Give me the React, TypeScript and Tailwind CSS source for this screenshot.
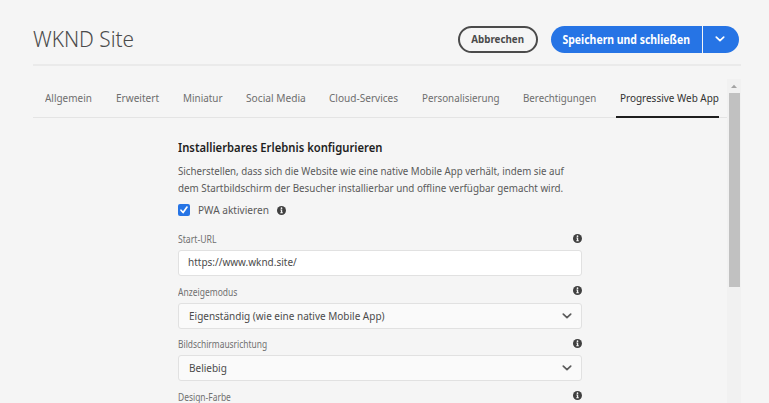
import React from 'react';

const tabs = [
  { label: 'Allgemein', width: 'w-[47px]', scale: 'scale-x-[0.905]' },
  { label: 'Erweitert', width: 'w-[43px]', scale: 'scale-x-[0.915]' },
  { label: 'Miniatur', width: 'w-[39px]', scale: 'scale-x-[0.9]' },
  { label: 'Social Media', width: 'w-[59px]', scale: 'scale-x-[0.925]' },
  { label: 'Cloud-Services', width: 'w-[69px]', scale: 'scale-x-[0.915]' },
  { label: 'Personalisierung', width: 'w-[77px]', scale: 'scale-x-[0.89]' },
  { label: 'Berechtigungen', width: 'w-[73px]', scale: 'scale-x-[0.885]' },
];

function Info() {
  return (
    <svg className="block size-[9px] shrink-0" viewBox="0 0 9 9">
      <circle cx="4.5" cy="4.5" r="4.5" fill="#404040" />
      <path d="M3.4 3.6h1.8v2.7h.6v.9H3.3v-.9h.6V4.5h-.5z" fill="#f5f5f5" />
      <circle cx="4.5" cy="2.2" r="0.85" fill="#f5f5f5" />
    </svg>
  );
}

function Chevron({ className }: { className: string }) {
  return (
    <svg className={className} viewBox="0 0 10 6" fill="none" stroke="currentColor" strokeWidth="1.7" strokeLinecap="round" strokeLinejoin="round">
      <path d="M1.3 1.1 5 4.7l3.7-3.6" />
    </svg>
  );
}

function Field({ label, labelScale, value, valueScale, select }: { label: string; labelScale: string; value?: string; valueScale?: string; select?: boolean }) {
  return (
    <div className="h-[52.6px]">
      <div className="flex h-[17px] items-start justify-between">
        <span className={`origin-left text-[10px] leading-[12px] whitespace-nowrap text-[#707070] ${labelScale}`}>{label}</span>
        <span className="pt-[0.5px]"><Info /></span>
      </div>
      {value && (
        <div className={`flex h-[26px] items-center justify-between rounded-[3px] border border-[#e1e1e1] pr-[9px] ${select ? 'bg-[#fafafa] pl-[10px]' : 'bg-white pb-[2px] pl-[9px]'}`}>
          <span className={`origin-left text-[11px] leading-4 whitespace-nowrap text-[#4b4b4b] ${valueScale}`}>{value}</span>
          {select && <Chevron className="h-[6px] w-[10px] text-[#5c5c5c]" />}
        </div>
      )}
    </div>
  );
}

export default function App() {
  return (
    <div className="h-[403px] w-[769px] overflow-hidden bg-[#f5f5f5] pr-[28px] pl-[33px] font-['Noto_Sans',sans-serif]">
      <header className="flex h-[66px] items-start justify-between border-b-2 border-[#eaeaea] pt-[26px]">
        <h1 className="-mt-px origin-left scale-x-[0.945] text-[22px] leading-[26px] font-light whitespace-nowrap text-[#4b4b4b]">WKND Site</h1>
        <div className="flex gap-[13px] pr-[2px]">
          <button className="flex h-[27px] w-[80px] items-center justify-center rounded-full border-2 border-[#4b4b4b] pb-px text-[11px] leading-4 font-bold whitespace-nowrap text-[#4b4b4b]">
            <span className="scale-x-[0.89]">Abbrechen</span>
          </button>
          <div className="flex h-[27px] gap-px">
            <button className="flex w-[151px] items-center justify-center rounded-l-full bg-[#2674e5] text-[12px] leading-4 font-bold whitespace-nowrap text-white">
              <span className="scale-x-[0.87]">Speichern und schließen</span>
            </button>
            <button className="flex w-[36px] items-center rounded-r-full bg-[#2674e5] pb-[2px] pl-[12px] text-white">
              <Chevron className="h-[6px] w-[10px]" />
            </button>
          </div>
        </div>
      </header>
      <div className="mt-[13px] flex h-[324px]">
        <div className="w-[694px]">
          <nav className="flex h-[39px] gap-[24px] border-b border-[#e4e4e4] pl-[12px] text-[11px] leading-4 text-[#6e6e6e]">
            {tabs.map((t) => (
              <span key={t.label} className={`shrink-0 pt-[11px] whitespace-nowrap ${t.width}`}>
                <span className={`inline-block origin-left ${t.scale}`}>{t.label}</span>
              </span>
            ))}
            <span className="-ml-[4px] h-[39px] w-[103px] shrink-0 border-b-2 border-[#1e1e1e] pt-[11px] pl-[4px] whitespace-nowrap text-[#323232]">
              <span className="inline-block origin-left scale-x-[0.905]">Progressive Web App</span>
            </span>
          </nav>
          <main className="ml-[145px] w-[404px] pt-[20px]">
            <h2 className="origin-left scale-x-[0.865] text-[13px] leading-[18px] font-semibold whitespace-nowrap text-[#1e1e1e]">Installierbares Erlebnis konfigurieren</h2>
            <p className="mt-[6px] text-[11px] leading-[17px] whitespace-nowrap text-[#5a5a5a]">
              <span className="block origin-left scale-x-[0.883]">Sicherstellen, dass sich die Website wie eine native Mobile App verhält, indem sie auf</span>
              <span className="block origin-left scale-x-[0.894]">dem Startbildschirm der Besucher installierbar und offline verfügbar gemacht wird.</span>
            </p>
            <div className="mt-[7px] flex h-[14px] items-center">
              <span className="flex size-[12px] items-center justify-center rounded-[2px] bg-[#2674e5]">
                <svg className="size-[10px]" viewBox="0 0 10 10" fill="none" stroke="white" strokeWidth="1.7" strokeLinecap="round" strokeLinejoin="round">
                  <path d="m2 5.2 2.1 2.3L8 2.1" />
                </svg>
              </span>
              <span className="ml-[8px] w-[79px] text-[11px] leading-4 whitespace-nowrap text-[#5a5a5a]">
                <span className="inline-block origin-left scale-x-[0.92]">PWA aktivieren</span>
              </span>
              <Info />
            </div>
            <div className="pt-[16px]">
              <Field label="Start-URL" labelScale="scale-x-[0.865]" value="https://www.wknd.site/" valueScale="scale-x-[0.908]" />
              <Field label="Anzeigemodus" labelScale="scale-x-[0.85]" value="Eigenständig (wie eine native Mobile App)" valueScale="scale-x-[0.908]" select />
              <Field label="Bildschirmausrichtung" labelScale="scale-x-[0.84]" value="Beliebig" valueScale="scale-x-[0.91]" select />
              <Field label="Design-Farbe" labelScale="scale-x-[0.845]" />
            </div>
          </main>
        </div>
        <aside className="flex w-[14px] shrink-0 flex-col items-center bg-[#f1f1f1]">
          <svg className="h-[14px] w-[14px] shrink-0" viewBox="0 0 14 14"><path d="m4 9 3-3.3L10 9z" fill="#a3a3a3" /></svg>
          <div className="h-[194px] w-[11px] bg-[#c1c1c1]" />
        </aside>
      </div>
    </div>
  );
}
